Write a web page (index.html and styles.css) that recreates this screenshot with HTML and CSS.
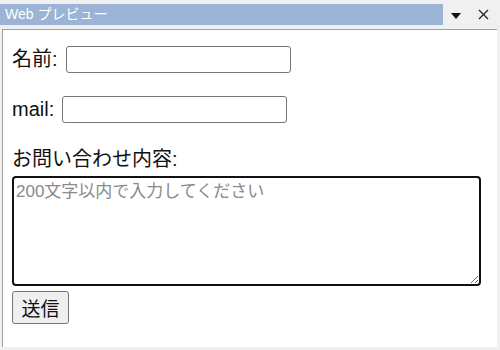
FILE: index.html
```html
<!DOCTYPE html>
<html lang="ja">
<head>
  <meta charset="UTF-8">
  <title>Web プレビュー</title>
  <link rel="stylesheet" href="styles.css">
</head>
<body>
  <!-- Title bar -->
  <div class="titlebar">
    <div class="title">Web プレビュー</div>
    <div class="tools">
      <svg class="drop" width="10" height="6" viewBox="0 0 10 6"><path d="M0 0H10L5 6Z" fill="#111"/></svg>
      <svg class="close" width="11" height="11" viewBox="0 0 11 11"><path d="M1 1L10 10M10 1L1 10" stroke="#222" stroke-width="1.3"/></svg>
    </div>
  </div>

  <!-- Preview panel -->
  <div class="panel">
    <form class="form">
      <div class="row">
        <label>名前:</label>
        <input type="text" class="field">
      </div>
      <div class="row">
        <label>mail:</label>
        <input type="text" class="field">
      </div>
      <label class="block">お問い合わせ内容:</label>
      <textarea class="message" placeholder="200文字以内で入力してください"></textarea>
      <button type="button" class="btn">送信</button>
    </form>
  </div>
</body>
</html>
```

FILE: styles.css
```css
* {
  margin: 0;
  padding: 0;
  box-sizing: border-box;
}

body {
  width: 500px;
  height: 350px;
  background-color: #f0f0f0;
  font-family: "Liberation Sans", "Noto Sans CJK JP", sans-serif;
  overflow: hidden;
}

/* Title bar */
.titlebar {
  display: flex;
  align-items: center;
  height: 21px;
  margin-top: 4px;
}
.title {
  width: 443px;
  height: 21px;
  background-color: #9bb3d5;
  color: #fff;
  font-size: 14px;
  line-height: 21px;
  padding-left: 5px;
}
.tools {
  display: flex;
  align-items: center;
  gap: 17px;
  padding-left: 8px;
}
.drop {
  margin-top: 2px;
}

/* Panel */
.panel {
  margin: 4px 3px 0 2px;
  height: 318px;
  background-color: #fff;
  border-left: 1px solid #a0a0a0;
  border-top: 1px solid #a0a0a0;
  padding: 16px 0 0 9px;
}
.form {
  display: flex;
  flex-direction: column;
  align-items: flex-start;
}
.row {
  display: flex;
  align-items: center;
  gap: 8px;
  margin-bottom: 23px;
}
label {
  font-size: 20px;
  line-height: 27px;
  color: #111;
}
.field {
  width: 225px;
  height: 27px;
  border: 1px solid #767676;
  border-radius: 3px;
}
.block {
  margin-bottom: 3px;
}
.message {
  width: 469px;
  height: 110px;
  border: 2px solid #111;
  border-radius: 4px;
  padding: 3px 2px;
  font-family: "Liberation Sans", "Noto Sans CJK JP", sans-serif;
  font-size: 17px;
  line-height: 22px;
  resize: both;
}
.message::placeholder {
  color: #8a8a8a;
}
.btn {
  margin-top: 5px;
  width: 57px;
  height: 33px;
  font-family: "Liberation Sans", "Noto Sans CJK JP", sans-serif;
  font-size: 19px;
  color: #111;
  background-color: #efefef;
  border: 1px solid #767676;
  border-radius: 3px;
}
```
